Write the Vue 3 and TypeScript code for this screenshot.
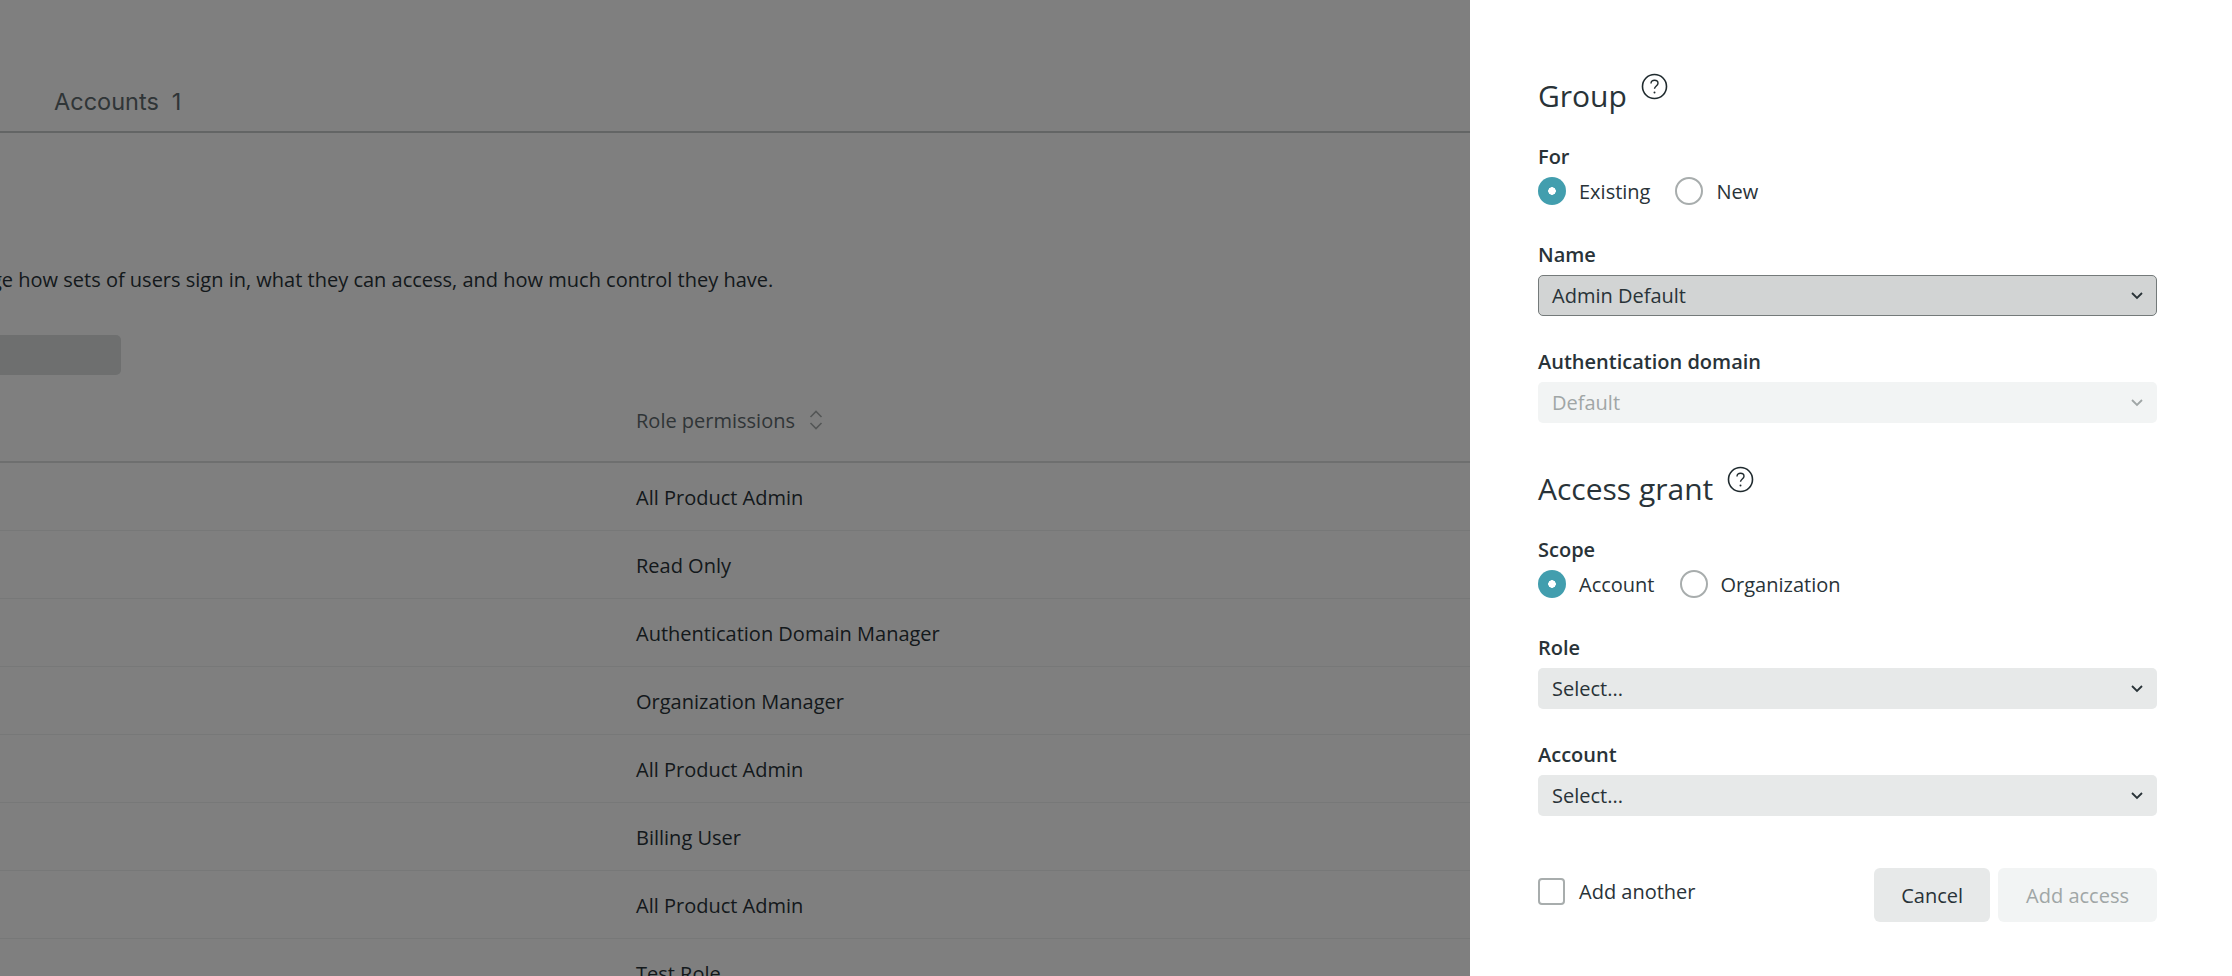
<script setup lang="ts">
// rows behind the drawer
const roles: string[] = [
  'All Product Admin',
  'Read Only',
  'Authentication Domain Manager',
  'Organization Manager',
  'All Product Admin',
  'Billing User',
  'All Product Admin',
  'Test Role',
]
</script>

<template>
  <div class="page">
    <nav class="tabs">
      <span class="tab">Accounts<span class="count">1</span></span>
    </nav>
    <p class="intro">Groups manage how sets of users sign in, what they can access, and how much control they have.</p>
    <div class="search"></div>
    <div class="table-head">
      <span class="th">Role permissions</span>
      <svg class="sort" width="14" height="22" viewBox="0 0 14 22" fill="none" stroke="currentColor" stroke-width="1.6">
        <path d="M1.5 8L7 2.5 12.5 8M1.5 14L7 19.5 12.5 14" />
      </svg>
    </div>
    <div v-for="(role, i) in roles" :key="i" class="row">{{ role }}</div>
  </div>

  <div class="overlay">
    <aside class="drawer">
      <div class="heading first">
        <h2>Group</h2>
        <svg class="help" width="27" height="27" viewBox="0 0 27 27" fill="none" stroke="currentColor">
          <circle cx="13.5" cy="13.5" r="12" stroke-width="1.6" />
          <path d="M10 10.6c0-2.1 1.5-3.4 3.5-3.4s3.5 1.2 3.5 3c0 2.7-3.5 2.8-3.5 5.6" stroke-width="1.4" />
          <circle cx="13.5" cy="19.4" r="1" fill="currentColor" stroke="none" />
        </svg>
      </div>

      <div class="label">For</div>
      <div class="radios">
        <span class="radio on"></span><span class="radio-text">Existing</span>
        <span class="radio"></span><span class="radio-text">New</span>
      </div>

      <div class="label name-label">Name</div>
      <div class="select active">
        <span>Admin Default</span>
        <svg class="chev" width="14" height="9" viewBox="0 0 14 9" fill="none" stroke="currentColor" stroke-width="1.8"><path d="M2 2l5 5 5-5" /></svg>
      </div>

      <div class="label auth-label">Authentication domain</div>
      <div class="select disabled">
        <span>Default</span>
        <svg class="chev" width="14" height="9" viewBox="0 0 14 9" fill="none" stroke="currentColor" stroke-width="1.8"><path d="M2 2l5 5 5-5" /></svg>
      </div>

      <div class="heading second">
        <h2>Access grant</h2>
        <svg class="help" width="27" height="27" viewBox="0 0 27 27" fill="none" stroke="currentColor">
          <circle cx="13.5" cy="13.5" r="12" stroke-width="1.6" />
          <path d="M10 10.6c0-2.1 1.5-3.4 3.5-3.4s3.5 1.2 3.5 3c0 2.7-3.5 2.8-3.5 5.6" stroke-width="1.4" />
          <circle cx="13.5" cy="19.4" r="1" fill="currentColor" stroke="none" />
        </svg>
      </div>

      <div class="label">Scope</div>
      <div class="radios">
        <span class="radio on"></span><span class="radio-text">Account</span>
        <span class="radio"></span><span class="radio-text">Organization</span>
      </div>

      <div class="label name-label">Role</div>
      <div class="select">
        <span>Select...</span>
        <svg class="chev" width="14" height="9" viewBox="0 0 14 9" fill="none" stroke="currentColor" stroke-width="1.8"><path d="M2 2l5 5 5-5" /></svg>
      </div>

      <div class="label auth-label">Account</div>
      <div class="select">
        <span>Select...</span>
        <svg class="chev" width="14" height="9" viewBox="0 0 14 9" fill="none" stroke="currentColor" stroke-width="1.8"><path d="M2 2l5 5 5-5" /></svg>
      </div>

      <div class="footer">
        <label class="check"><span class="box"></span>Add another</label>
        <div class="buttons">
          <button class="btn">Cancel</button>
          <button class="btn off">Add access</button>
        </div>
      </div>
    </aside>
  </div>
</template>

<style>
html, body {
  margin: 0;
  height: 100%;
  overflow: hidden;
  background: #fff;
}
</style>

<style scoped>
.page {
  width: 1600px;
  margin-left: -130px;
  font-family: "Open Sans", sans-serif;
  font-size: 20px;
  color: #293338;
}

.tabs {
  height: 131px;
  padding-left: 184px;
  border-bottom: 2px solid #c6caca;
  display: flex;
  align-items: flex-end;
}

.tab {
  font-family: "Inter", sans-serif;
  font-size: 23.5px;
  color: #5f6a6e;
  padding-bottom: 15px;
}

.count {
  margin-left: 13px;
}

.intro {
  margin: 133px 0 0 -6px;
  line-height: 28px;
  white-space: nowrap;
}

.search {
  width: 251px;
  height: 40px;
  margin-top: 41px;
  background: #dcdede;
  border-radius: 5px;
}

.table-head {
  height: 82px;
  padding-top: 4px;
  padding-left: 766px;
  border-bottom: 2px solid #dcdede;
  display: flex;
  align-items: center;
  gap: 14px;
  color: #5f6a6e;
}

.sort {
  color: #a8adad;
}

.row {
  height: 67px;
  padding-left: 766px;
  line-height: 69px;
  border-bottom: 1px solid #eef0f0;
}

.overlay {
  position: fixed;
  inset: 0;
  background: rgba(0, 0, 0, 0.5);
  display: flex;
  justify-content: flex-end;
}

.drawer {
  width: 762px;
  height: 100%;
  box-sizing: border-box;
  padding: 0 75px 0 68px;
  background: #fff;
  font-family: "Open Sans", sans-serif;
  font-size: 20px;
  color: #293338;
}

.heading {
  display: flex;
  align-items: flex-start;
  gap: 14px;
}

.heading.first {
  padding-top: 75px;
}

.heading.second {
  margin-top: 45px;
}

h2 {
  margin: 0;
  font-size: 30px;
  font-weight: 400;
  line-height: 41px;
}

.help {
  margin-top: -2px;
  color: #1f2a2e;
}

.label {
  margin-top: 27px;
  font-weight: 600;
  line-height: 27px;
}

.name-label {
  margin-top: 33px;
}

.auth-label {
  margin-top: 32px;
}

.radios {
  display: flex;
  align-items: center;
  height: 34px;
  margin-top: 4px;
}

.radio {
  width: 28px;
  height: 28px;
  box-sizing: border-box;
  border: 2px solid #a8adad;
  border-radius: 50%;
  flex: none;
}

.radio.on {
  border: 0;
  background: radial-gradient(circle, #fff 0 3.5px, #429eae 4px);
}

.radio-text {
  margin: 0 25px 0 13px;
}

.select {
  height: 41px;
  box-sizing: border-box;
  padding: 0 13px 0 14px;
  display: flex;
  align-items: center;
  justify-content: space-between;
  background: #e7e9e9;
  border-radius: 5px;
  margin-top: 7px;
}

.select.active {
  background: #d2d4d4;
  border: 1.5px solid #747a7a;
  padding: 0 12px 0 13px;
}

.select.disabled {
  background: #f2f4f4;
  color: #a0a6a6;
}

.footer {
  display: flex;
  justify-content: space-between;
  align-items: flex-start;
  margin-top: 52px;
}

.check {
  display: flex;
  align-items: center;
  gap: 14px;
  margin-top: 10px;
}

.box {
  width: 27px;
  height: 27px;
  box-sizing: border-box;
  border: 2px solid #a8adad;
  border-radius: 4px;
}

.buttons {
  display: flex;
  gap: 8px;
}

.btn {
  height: 54px;
  padding: 0 27px;
  border: 0;
  border-radius: 6px;
  background: #e7e9e9;
  color: #293338;
  font: inherit;
}

.btn.off {
  padding: 0 28px;
  background: #f2f4f4;
  color: #a0a6a6;
}
</style>
